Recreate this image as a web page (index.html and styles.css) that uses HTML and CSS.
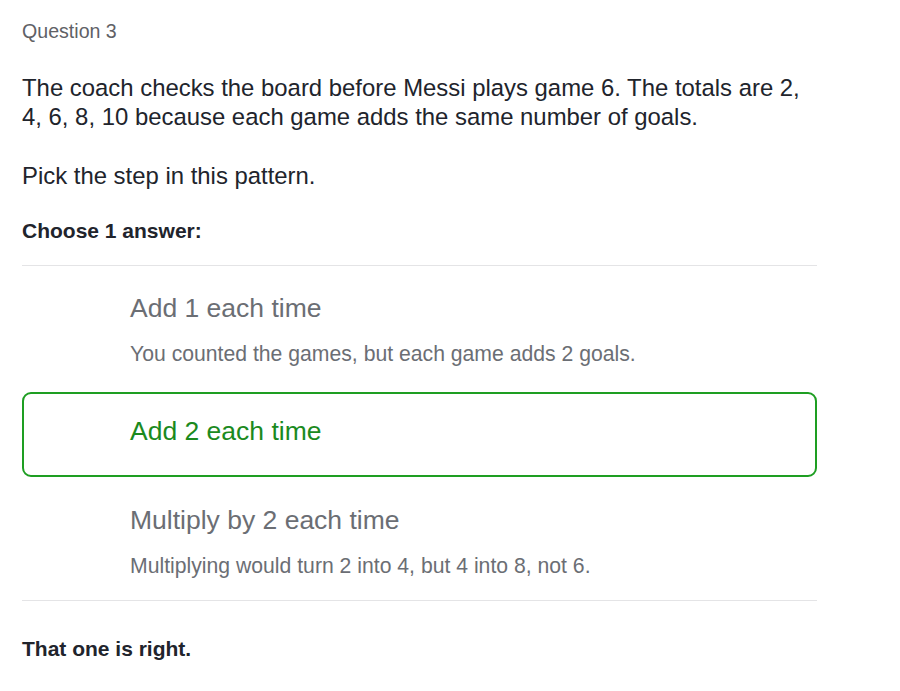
FILE: index.html
```html
<!DOCTYPE html>
<html lang="en">
<head>
<meta charset="utf-8">
<title>Question 3</title>
<link rel="stylesheet" href="styles.css">
</head>
<body>
<main class="question">
  <div class="question-label">Question 3</div>
  <p class="prompt">The coach checks the board before Messi plays game 6. The totals are 2, 4, 6, 8, 10 because each game adds the same number of goals.</p>
  <p class="prompt prompt--ask">Pick the step in this pattern.</p>
  <div class="choose">Choose 1 answer:</div>
  <hr class="divider">
  <ul class="options">
    <li class="option">
      <div class="option-title">Add 1 each time</div>
      <div class="option-feedback">You counted the games, but each game adds 2 goals.</div>
    </li>
    <li class="option option--correct">
      <div class="option-title">Add 2 each time</div>
    </li>
    <li class="option">
      <div class="option-title">Multiply by 2 each time</div>
      <div class="option-feedback">Multiplying would turn 2 into 4, but 4 into 8, not 6.</div>
    </li>
  </ul>
  <hr class="divider divider--bottom">
  <div class="result">That one is right.</div>
</main>
</body>
</html>
```

FILE: styles.css
```css
* { box-sizing: border-box; }
html, body {
  margin: 0;
  padding: 0;
  background: #ffffff;
}
body {
  font-family: "Liberation Sans", Arial, Helvetica, sans-serif;
  color: #21242c;
}
.question {
  width: 795px;
  margin-left: 22px;
  padding-top: 19px;
}
.question-label {
  font-size: 19.6px;
  line-height: 24px;
  color: #5f6166;
}
.prompt {
  margin: 30px 0 0;
  font-size: 23.9px;
  line-height: 29px;
  color: #21242c;
}
.choose {
  margin-top: 26px;
  font-size: 21px;
  line-height: 29px;
  font-weight: bold;
  color: #21242c;
}
.divider {
  margin: 20px 0 0;
  border: 0;
  height: 1px;
  background: #e4e4e6;
}
.options {
  list-style: none;
  margin: 3px 0 0;
  padding: 0;
  display: flex;
  flex-direction: column;
  gap: 4.5px;
}
.option {
  border: 2px solid transparent;
  border-radius: 9px;
  padding: 21px 24px 17px 106px;
}
.option-title {
  font-size: 26.5px;
  line-height: 32px;
  color: #6b6e74;
}
.option-feedback {
  margin-top: 15px;
  font-size: 21.2px;
  line-height: 29px;
  color: #6b6e74;
}
.option--correct {
  border-color: #1e9e22;
  padding-bottom: 28px;
}
.option--correct .option-title {
  color: #1b8a1e;
}
.divider--bottom {
  margin-top: 1px;
}
.result {
  margin-top: 33px;
  font-size: 21px;
  line-height: 29px;
  font-weight: bold;
  color: #21242c;
}
```
